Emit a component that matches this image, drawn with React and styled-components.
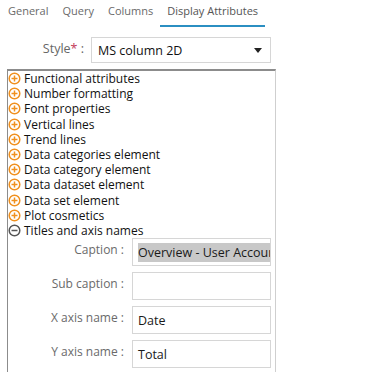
import styled, { createGlobalStyle } from "styled-components";

const GlobalStyle = createGlobalStyle`
  body {
    margin: 0;
    background: #ffffff;
    font-family: "Open Sans", "DejaVu Sans", sans-serif;
  }
`;

const StyledApp = styled.div`
  width: 389px;
  height: 372px;
  overflow: hidden;
  background: #ffffff;
`;

const StyledTabs = styled.div`
  display: flex;
  padding-left: 1px;
  height: 27px;
`;

const StyledTab = styled.div`
  padding: 3px 7px 0;
  font-size: 11px;
  color: ${({ active }) => (active ? "#555555" : "#6a6a6a")};
  border-bottom: 2px solid ${({ active }) => (active ? "#2b8fc2" : "transparent")};
  box-sizing: border-box;
  height: 27px;
`;

const StyledStyleRow = styled.div`
  display: flex;
  align-items: center;
  margin-top: 10px;
  height: 26px;
`;

const StyledStyleLabel = styled.div`
  width: 87px;
  text-align: right;
  font-size: 12.5px;
  color: #666666;
  padding-right: 3px;
  box-sizing: border-box;
  margin-top: -4px;
`;

const StyledStar = styled.span`
  color: #c23a5a;
`;

const StyledSelect = styled.div`
  width: 180px;
  height: 26px;
  box-sizing: border-box;
  border: 1px solid #d6d6d6;
  margin-left: 4px;
  display: flex;
  align-items: center;
  justify-content: space-between;
  padding: 0 6px 0 6px;
  font-size: 12.5px;
  color: #111111;
`;

const StyledCaret = styled.span`
  width: 0;
  height: 0;
  border-left: 4px solid transparent;
  border-right: 4px solid transparent;
  border-top: 5px solid #222222;
  margin-right: 2px;
`;

const StyledPanel = styled.div`
  margin: 6px 0 0 7px;
  width: 269px;
  box-sizing: border-box;
  border-top: 2px solid #8c8c8c;
  border-left: 1px solid #8c8c8c;
  border-right: 1px solid #cfcfcf;
  height: 320px;
`;

const StyledItem = styled.div`
  display: flex;
  align-items: center;
  gap: 3px;
  height: 15.2px;
  line-height: 15px;
  font-size: 12px;
  color: #111111;
  white-space: nowrap;
`;

const StyledForm = styled.div`
  display: flex;
  flex-direction: column;
  gap: 6px;
  margin-top: 0;
`;

const StyledField = styled.div`
  display: flex;
  align-items: center;
  height: 28px;
`;

const StyledFieldLabel = styled.div`
  width: 124px;
  text-align: right;
  font-size: 12px;
  color: #6a6a6a;
  padding-right: 8px;
  box-sizing: border-box;
  margin-top: -6px;
`;

const StyledInput = styled.div`
  width: 139px;
  height: 28px;
  box-sizing: border-box;
  border: 1px solid #d6d6d6;
  display: flex;
  align-items: center;
  padding-left: 5px;
  overflow: hidden;
  white-space: nowrap;
  font-size: 12.5px;
  color: #1a1a1a;
`;

const StyledSelected = styled.span`
  background: #c8c8c8;
  padding: 1px 0;
`;

function ToggleIcon({ open }) {
  const color = open ? "#555555" : "#f0901e";
  return (
    <svg width="13" height="13" viewBox="0 0 13 13">
      <circle cx="6.5" cy="6.5" r="5.3" fill="none" stroke={color} strokeWidth="1.5" />
      <line x1="3.5" y1="6.5" x2="9.5" y2="6.5" stroke={color} strokeWidth="1.5" />
      {!open && <line x1="6.5" y1="3.5" x2="6.5" y2="9.5" stroke={color} strokeWidth="1.5" />}
    </svg>
  );
}

const sections = [
  "Functional attributes",
  "Number formatting",
  "Font properties",
  "Vertical lines",
  "Trend lines",
  "Data categories element",
  "Data category element",
  "Data dataset element",
  "Data set element",
  "Plot cosmetics",
];

const fields = [
  { label: "Caption", value: "Overview - User Accounts", selected: true },
  { label: "Sub caption", value: "" },
  { label: "X axis name", value: "Date" },
  { label: "Y axis name", value: "Total" },
];

function App() {
  return (
    <StyledApp>
      <GlobalStyle />
      <StyledTabs>
        <StyledTab>General</StyledTab>
        <StyledTab>Query</StyledTab>
        <StyledTab>Columns</StyledTab>
        <StyledTab active>Display Attributes</StyledTab>
      </StyledTabs>

      <StyledStyleRow>
        <StyledStyleLabel>
          Style<StyledStar>*</StyledStar> :
        </StyledStyleLabel>
        <StyledSelect>
          <span>MS column 2D</span>
          <StyledCaret />
        </StyledSelect>
      </StyledStyleRow>

      <StyledPanel>
        {sections.map((name) => (
          <StyledItem key={name}>
            <ToggleIcon />
            {name}
          </StyledItem>
        ))}
        <StyledItem>
          <ToggleIcon open />
          Titles and axis names
        </StyledItem>
        <StyledForm>
          {fields.map((field) => (
            <StyledField key={field.label}>
              <StyledFieldLabel>{field.label} :</StyledFieldLabel>
              <StyledInput>
                {field.selected ? (
                  <StyledSelected>{field.value}</StyledSelected>
                ) : (
                  field.value
                )}
              </StyledInput>
            </StyledField>
          ))}
        </StyledForm>
      </StyledPanel>
    </StyledApp>
  );
}

export default App;
